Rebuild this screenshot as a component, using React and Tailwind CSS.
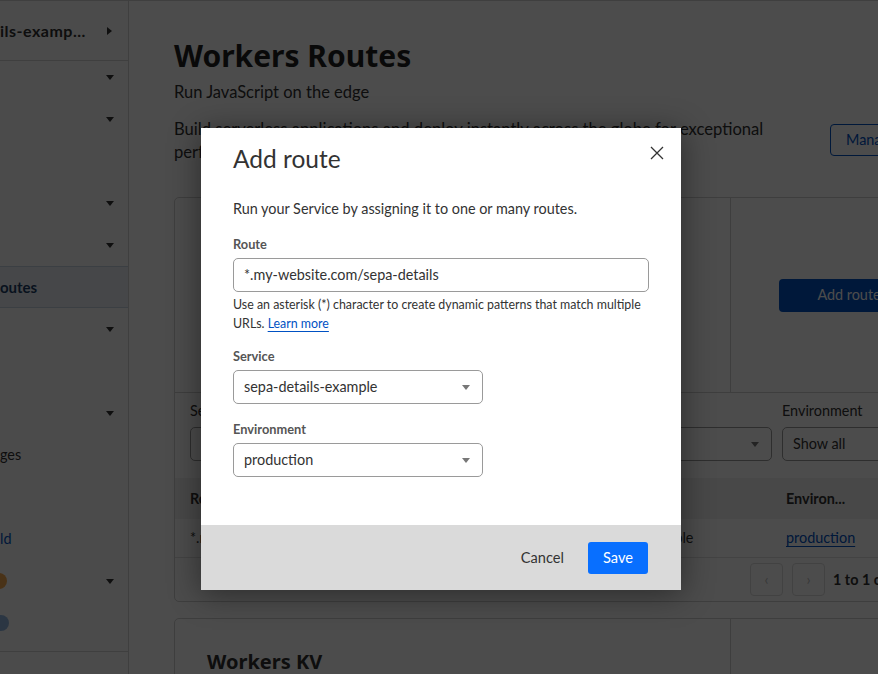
import React from "react";

const Caret = ({ className = "border-t-[#333]" }) => (
  <span className={`inline-block h-0 w-0 border-x-[4px] border-t-[5px] border-x-transparent ${className}`} />
);

const SideRow = ({ children, caret, active }) => (
  <div
    className={`flex h-[42px] items-center justify-between pr-[14px] ${
      active ? "border-y border-[#c6d2e0] bg-[#e9eef5]" : ""
    }`}
  >
    <div className="flex items-center">{children}</div>
    {caret && <Caret />}
  </div>
);

const Select = ({ value, className = "" }) => (
  <div
    className={`flex h-[34px] items-center justify-between rounded-[5px] border border-[#9a9a9a] bg-white pl-[10px] pr-[12px] text-[14.4px] text-[#333] ${className}`}
  >
    <span>{value}</span>
    <Caret className="border-t-[#777]" />
  </div>
);

export default function App() {
  return (
    <div className="relative h-[674px] w-[878px] overflow-hidden bg-white font-['Lato',sans-serif] text-[#313131]">
      <div className="flex h-full border-t border-[#d4d4d4]">
        {/* sidebar */}
        <aside className="w-[129px] shrink-0 overflow-hidden border-r border-[#d4d4d4] bg-[#fbfbfb]">
          <div className="flex h-[60px] items-center justify-between border-b border-[#d4d4d4] pr-[16px]">
            <span className="whitespace-nowrap text-[16px] font-bold tracking-[0.5px]">ils-examp...</span>
            <span className="inline-block h-0 w-0 border-y-[4px] border-l-[5px] border-y-transparent border-l-[#333]" />
          </div>
          <div className="-mt-[5px]">
            <SideRow caret />
            <SideRow caret />
            <SideRow />
            <SideRow caret />
            <SideRow caret />
            <SideRow active>
              <span className="text-[15px] font-bold text-[#1d3e66]">outes</span>
            </SideRow>
            <SideRow caret />
            <SideRow />
            <SideRow caret />
            <SideRow>
              <span className="text-[14.4px]">ges</span>
            </SideRow>
            <SideRow />
            <SideRow>
              <span className="text-[14.4px] text-[#0051c3]">ld</span>
            </SideRow>
            <SideRow caret>
              <span className="-ml-[9px] inline-block h-[16px] w-[16px] rounded-full bg-[#f6a94e]" />
            </SideRow>
            <SideRow>
              <span className="-ml-[7px] inline-block h-[16px] w-[16px] rounded-full bg-[#8fb6e0]" />
            </SideRow>
          </div>
          <div className="mt-[7px] border-t border-[#d4d4d4]" />
        </aside>

        {/* main */}
        <main className="min-w-0 flex-1 overflow-hidden pl-[45px] pt-[37px]">
          <div className="w-[780px]">
            <h1 className="font-['Noto_Sans',sans-serif] text-[30px] font-bold leading-[36px] text-[#1f1f1f]">
              Workers Routes
            </h1>
            <p className="mt-[6px] text-[16.5px] leading-[24px]">Run JavaScript on the edge</p>
            <div className="mt-[14px] flex items-start">
              <p className="w-[656px] shrink-0 whitespace-nowrap text-[16.6px] leading-[23px]">
                Build serverless applications and deploy instantly across the globe for exceptional
                <br />
                performance, reliability, and scale.
              </p>
              <button className="mt-[6px] h-[32px] shrink-0 whitespace-nowrap rounded-[4px] border border-[#0051c3] px-[15px] text-[14.4px] text-[#0051c3]">
                Manage Workers
              </button>
            </div>

            {/* routes card */}
            <div className="mt-[33px] rounded-[5px] border border-[#cfcfcf]">
              <div className="flex h-[194px]">
                <div className="w-[556px] shrink-0 border-r border-[#cfcfcf] px-[32px] pt-[32px]">
                  <h2 className="font-['Noto_Sans',sans-serif] text-[20px] font-bold">Routes</h2>
                </div>
                <div className="flex items-center pl-[48px]">
                  <button className="h-[33px] w-[140px] rounded-[4px] bg-[#0051c3] text-[14.4px] text-white">
                    Add route
                  </button>
                </div>
              </div>
              <div className="flex gap-[10px] border-t border-[#cfcfcf] px-[15px] pb-[17px] pt-[10px]">
                <div className="w-[281px] shrink-0">
                  <div className="mb-[8px] text-[14.4px] leading-[16px]">Search</div>
                  <div className="h-[34px] rounded-[5px] border border-[#9a9a9a]" />
                </div>
                <div className="w-[291px] shrink-0">
                  <div className="mb-[8px] text-[14.4px] leading-[16px]">Service</div>
                  <Select value="Show all" />
                </div>
                <div className="w-[160px] shrink-0">
                  <div className="mb-[8px] text-[14.4px] leading-[16px]">Environment</div>
                  <Select value="Show all" />
                </div>
              </div>
              <div className="flex h-[41px] items-center bg-[#f2f2f2] px-[15px] text-[14.4px] font-bold">
                <span className="w-[596px]">Route</span>
                <span>Environ...</span>
              </div>
              <div className="flex h-[39px] items-center border-b border-[#e2e2e2] px-[15px] text-[14.4px]">
                <span className="w-[370px]">*.my-website.com/sepa-details</span>
                <span className="w-[226px]">sepa-details-example</span>
                <span className="text-[#0051c3] underline underline-offset-[3px]">production</span>
              </div>
              <div className="flex h-[43px] items-center pl-[575px] text-[14.4px]">
                <span className="flex h-[33px] w-[33px] items-center justify-center rounded-[4px] border border-[#dcdcdc] text-[#bbb]">
                  ‹
                </span>
                <span className="ml-[9px] flex h-[33px] w-[33px] items-center justify-center rounded-[4px] border border-[#dcdcdc] text-[#bbb]">
                  ›
                </span>
                <span className="ml-[8px] whitespace-nowrap font-bold">1 to 1 of 1</span>
              </div>
            </div>

            {/* kv card */}
            <div className="mt-[16px] flex h-[200px] rounded-[5px] border border-[#cfcfcf]">
              <div className="w-[556px] shrink-0 border-r border-[#cfcfcf] px-[32px] pt-[28px]">
                <h2 className="font-['Noto_Sans',sans-serif] text-[20px] font-bold">Workers KV</h2>
              </div>
            </div>
          </div>
        </main>
      </div>

      {/* overlay */}
      <div className="absolute inset-0 bg-black/70" />

      {/* modal */}
      <div className="absolute inset-0 flex justify-center pl-[4px] pt-[128px]">
        <div className="flex h-[462px] w-[480px] flex-col bg-white shadow-[0_4px_30px_rgba(0,0,0,0.45)]">
          <div className="flex items-start justify-between pl-[32px] pr-[17px] pt-[15px]">
            <h3 className="text-[24.5px] leading-[32px] text-[#333]">Add route</h3>
            <svg className="mt-[3px]" width="14" height="14" viewBox="0 0 14 14" fill="none" stroke="#333" strokeWidth="1.3">
              <path d="M1 1L13 13M13 1L1 13" />
            </svg>
          </div>
          <div className="flex-1 px-[32px] pt-[24px]">
            <p className="text-[14.4px] leading-[20px] text-[#333]">
              Run your Service by assigning it to one or many routes.
            </p>
            <label className="mt-[17px] block text-[12.8px] font-bold leading-[16px] text-[#555]">Route</label>
            <div className="mt-[6px] flex h-[34px] items-center rounded-[5px] border border-[#9a9a9a] px-[10px] text-[14.4px] text-[#333]">
              *.my-website.com/sepa-details
            </div>
            <p className="mt-[3px] text-[12.4px] leading-[19px] text-[#333]">
              Use an asterisk (*) character to create dynamic patterns that match multiple URLs.{" "}
              <a className="text-[#0051c3] underline underline-offset-[3px]">Learn more</a>
            </p>
            <label className="mt-[15px] block text-[12.8px] font-bold leading-[16px] text-[#555]">Service</label>
            <Select value="sepa-details-example" className="mt-[6px] w-[250px]" />
            <label className="mt-[17px] block text-[12.8px] font-bold leading-[16px] text-[#555]">Environment</label>
            <Select value="production" className="mt-[6px] w-[250px]" />
          </div>
          <div className="flex h-[65px] items-center justify-end gap-[12px] bg-[#dadada] pr-[33px]">
            <button className="px-[12px] text-[14.6px] text-[#333]">Cancel</button>
            <button className="h-[32px] w-[60px] rounded-[3px] bg-[#086fff] text-[14.6px] text-white">Save</button>
          </div>
        </div>
      </div>
    </div>
  );
}
